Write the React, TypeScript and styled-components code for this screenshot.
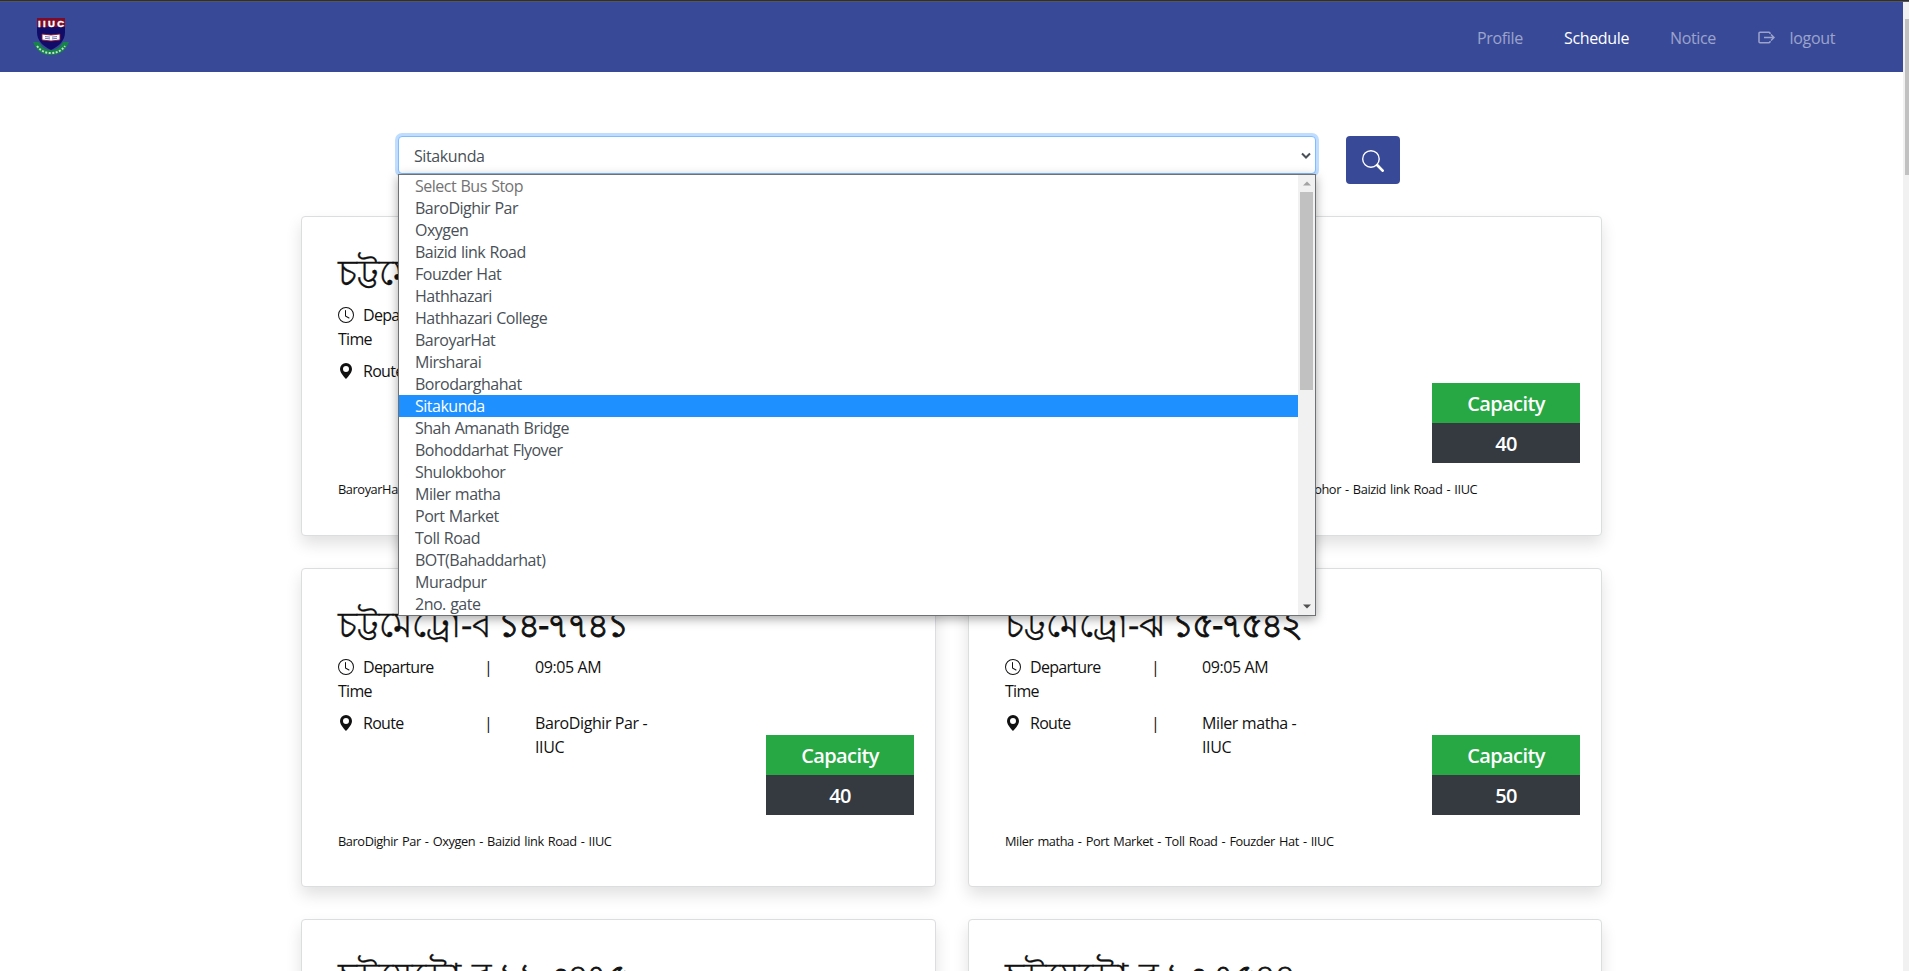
import React from 'react';
import styled, { createGlobalStyle, css } from 'styled-components';

const Global = createGlobalStyle`
  *, *::before, *::after { box-sizing: border-box; }
  html, body { margin: 0; height: 100%; overflow: hidden; background: #fff; }
  body { font: 400 16px/24px "Open Sans", "Noto Sans", sans-serif; color: #111; }
`;

const Screen = styled.div`
  display: flex;
  width: 1909px;
  height: 971px;
  overflow: hidden;
  border-top: 1px solid #2f2f33;
`;
const Page = styled.div`
  width: 1903px;
  height: 970px;
  overflow: hidden;
  border-top: 1px solid #55565a;
`;
const PageScroll = styled.div`
  width: 6px;
  padding: 17px 0 0 2px;
  background: #f1f1f1;
  border-top: 1px solid #55565a;
`;
const PageThumb = styled.div`
  height: 156px;
  background: #c1c1c1;
`;
const Nav = styled.nav`
  display: flex;
  align-items: center;
  justify-content: space-between;
  height: 70px;
  padding: 0 68px 0 33px;
  background: #384998;
`;
const Links = styled.div`
  display: flex;
  align-items: center;
  gap: 41px;
`;
const NavLink = styled.a<{ $active?: boolean; $w: number }>`
  display: flex;
  align-items: center;
  justify-content: space-between;
  width: ${p => p.$w}px;
  padding-top: 1px;
  white-space: nowrap;
  letter-spacing: -0.35px;
  color: ${p => (p.$active ? '#fff' : 'rgba(255,255,255,.5)')};
`;
const Main = styled.main`
  width: 1301px;
  margin: 0 auto;
  padding-top: 64px;
`;
const Search = styled.form`
  display: flex;
  align-items: flex-start;
  gap: 30px;
  height: 80px;
  padding-left: 97px;
`;
const Field = styled.div`
  position: relative;
  width: 918px;
`;
const Select = styled.div`
  display: flex;
  align-items: center;
  justify-content: space-between;
  height: 38px;
  padding: 1px 4px 0 15px;
  border: 1px solid #80bdff;
  border-radius: 4px;
  box-shadow: 0 0 0 3px #bfdeff;
  color: #495057;
  letter-spacing: -0.4px;
  background: #fff;
`;
const Menu = styled.div`
  position: absolute;
  z-index: 5;
  top: 38px;
  left: 0;
  display: flex;
  width: 918px;
  height: 442px;
  background: #fff;
  border: 1px solid #6f7275;
  box-shadow: 0 3px 10px rgba(0,0,0,.35);
`;
const Options = styled.div`
  flex: 1;
`;
const Option = styled.div<{ $state?: 'muted' | 'selected' }>`
  height: 22px;
  padding-left: 16px;
  line-height: 22px;
  color: #495057;
  letter-spacing: -0.5px;
  word-spacing: 0.7px;
  ${p => p.$state === 'muted' && css`color: #737373;`}
  ${p => p.$state === 'selected' && css`color: #fff; background: #1e90ff;`}
`;
const MenuScroll = styled.div`
  display: flex;
  flex-direction: column;
  justify-content: space-between;
  align-items: center;
  width: 17px;
  padding: 6px 0;
  background: #f1f1f1;
`;
const MenuThumb = styled.div`
  width: 13px;
  height: 198px;
  margin: 6px 0 auto;
  background: #c1c1c1;
`;
const SearchButton = styled.button`
  display: flex;
  align-items: center;
  justify-content: center;
  width: 54px;
  height: 48px;
  padding: 2px 0 0;
  border: 0;
  border-radius: 4px;
  background: #384998;
`;
const Grid = styled.div`
  display: grid;
  grid-template-columns: 635px 634px;
  grid-auto-rows: 319.600px;
  gap: 32px;
`;
const Card = styled.article`
  padding: 35px 21px 0 36px;
  background: #fff;
  border: 1px solid #dcdddf;
  border-radius: 4px;
  box-shadow: 0 8px 16px rgba(0,0,0,.12);
`;
const Plate = styled.h2`
  height: 40px;
  margin: 0 0 8px;
  font-weight: 400;
  font-size: 35px;
  line-height: 40px;
  white-space: nowrap;
  -webkit-text-stroke: 0.3px currentColor;
`;
const PlateNumber = styled.span`
  margin-left: -2px;
  font-size: 34px;
  letter-spacing: -2px;
  -webkit-text-stroke: 0.8px currentColor;
`;
const Body = styled.div`
  display: flex;
  justify-content: space-between;
  height: 166px;
`;
const Facts = styled.div`
  width: 340px;
  padding-top: 3px;
`;
const Fact = styled.div`
  display: grid;
  grid-template-columns: 146px 51px 122px;
  margin-bottom: 8px;
  letter-spacing: -0.4px;
`;
const Label = styled.div`
  width: 110px;
  letter-spacing: -0.7px;
  svg { margin-right: 9px; vertical-align: -2px; }
`;
const Capacity = styled.div`
  width: 148px;
  margin-top: 83px;
  color: #fff;
  font-weight: 600;
  font-size: 20px;
  line-height: 41px;
  text-align: center;
  letter-spacing: -0.6px;
`;
const CapacityRow = styled.div<{ $tone: string }>`
  height: 40px;
  background: ${p => p.$tone};
`;
const Stops = styled.p`
  margin: 13px 0 0;
  font-size: 12.800px;
  line-height: 20px;
  letter-spacing: -0.42px;
  word-spacing: 1.200px;
  white-space: nowrap;
`;

const Logo = () => (
  <svg width="36" height="38" viewBox="0 0 36 38">
    <path d="M4 0h28v14c0 9-6 14-14 18C10 28 4 23 4 14z" fill="#100c68" />
    <path d="M4 0h28v9H4z" fill="#7d0c2b" />
    <text x="18" y="8.500" fill="#fff" fontFamily="Liberation Sans" fontWeight="700" fontSize="9.500" textAnchor="middle" textLength="26" stroke="#fff" strokeWidth=".4">IIUC</text>
    <path d="M9 16l9 1 9-1v6l-9 1-9-1z" fill="#fff" stroke="#8a1636" strokeWidth=".9" />
    <path d="M12 18.500l5 .6M12 20.300l5 .6M24 18.500l-5 .6M24 20.300l-5 .6" stroke="#5a58a0" strokeWidth=".8" />
    <path d="M0 24l6 0c3 6 7 8 12 8s9-2 12-8h6l-2 4c-3 6-9 9-16 9S5 34 2 28z" fill="#168348" />
    <path d="M4 28c4 5 8 7 14 7s10-2 14-7" fill="none" stroke="#bfe2cb" strokeWidth="2" strokeDasharray="2 1.500" />
  </svg>
);
const Clock = () => (
  <svg width="16" height="16" viewBox="0 0 16 16" fill="currentColor">
    <path d="M8 15A7 7 0 1 0 8 1a7 7 0 0 0 0 14zm8-7A8 8 0 1 1 0 8a8 8 0 0 1 16 0z" />
    <path d="M7.500 3a.5.5 0 0 1 .5.5v5.210l3.248 1.856a.5.5 0 0 1-.496.868l-3.500-2A.5.5 0 0 1 7 9V3.500a.5.5 0 0 1 .5-.5z" />
  </svg>
);
const Pin = () => (
  <svg width="16" height="16" viewBox="0 0 16 16" fill="currentColor">
    <path fillRule="evenodd" d="M8 16s6-5.686 6-10A6 6 0 0 0 2 6c0 4.314 6 10 6 10zm0-7a3 3 0 1 0 0-6 3 3 0 0 0 0 6z" />
  </svg>
);
const Exit = () => (
  <svg width="17" height="16" viewBox="0 0 17 16" fill="none" stroke="currentColor" strokeWidth="1.500">
    <path d="M12 4V3.200a1 1 0 0 0-1-1H2a1 1 0 0 0-1 1v8.600a1 1 0 0 0 1 1h9a1 1 0 0 0 1-1V11M6 7.500h10M13 4.500l3 3-3 3" />
  </svg>
);
const Magnifier = () => (
  <svg width="22" height="22" viewBox="0 0 16 16" fill="#fff">
    <path fillRule="evenodd" d="M10.442 10.442a1 1 0 0 1 1.415 0l3.850 3.850a1 1 0 0 1-1.414 1.415l-3.850-3.850a1 1 0 0 1 0-1.415z" />
    <path fillRule="evenodd" d="M6.500 12a5.500 5.500 0 1 0 0-11 5.500 5.500 0 0 0 0 11zM13 6.500a6.500 6.500 0 1 1-13 0 6.500 6.500 0 0 1 13 0z" />
  </svg>
);
const Chevron = () => (
  <svg width="10" height="8" viewBox="0 0 10 8" fill="none" stroke="#495057" strokeWidth="2">
    <path d="M1 1.500l4 4 4-4" />
  </svg>
);
const Arrow = ({ down = false }: { down?: boolean }) => (
  <svg width="8" height="5" viewBox="0 0 8 5" fill={down ? '#505050' : '#a3a3a3'}>
    <path d={down ? 'M0 .5h8l-4 4z' : 'M0 4.500h8l-4-4z'} />
  </svg>
);

const stops = [
  'Select Bus Stop', 'BaroDighir Par', 'Oxygen', 'Baizid link Road', 'Fouzder Hat', 'Hathhazari',
  'Hathhazari College', 'BaroyarHat', 'Mirsharai', 'Borodarghahat', 'Sitakunda', 'Shah Amanath Bridge',
  'Bohoddarhat Flyover', 'Shulokbohor', 'Miler matha', 'Port Market', 'Toll Road', 'BOT(Bahaddarhat)',
  'Muradpur', '2no. gate',
];
const buses = [
  { plate: 'চট্টমেট্রো-ব', number: '১১-৩৪৭১', route: 'BaroyarHat - IIUC', seats: 40, via: 'BaroyarHat - Mirsharai - Sitakunda - IIUC' },
  { plate: 'চট্টমেট্রো-ব', number: '১১-৩৪৭২', route: 'Bohoddarhat Flyover - IIUC', seats: 40, via: 'Bohoddarhat Flyover - Muradpur - 2no. gate - Shulokbohor - Baizid link Road - IIUC' },
  { plate: 'চট্টমেট্রো-ব', number: '১৪-৭৭৪১', route: 'BaroDighir Par - IIUC', seats: 40, via: 'BaroDighir Par - Oxygen - Baizid link Road - IIUC' },
  { plate: 'চট্টমেট্রো-ঝ', number: '১৫-৭৫৪২', route: 'Miler matha - IIUC', seats: 50, via: 'Miler matha - Port Market - Toll Road - Fouzder Hat - IIUC' },
  { plate: 'চট্টমেট্রো-ব', number: '১১-৩৪৭৫', route: 'Oxygen - IIUC', seats: 40, via: 'Oxygen - Baizid link Road - IIUC' },
  { plate: 'চট্টমেট্রো-ব', number: '১৩-৭৫৪৪', route: 'Muradpur - IIUC', seats: 40, via: 'Muradpur - 2no. gate - IIUC' },
];

export default function App() {
  return (
    <Screen>
      <Global />
      <Page>
        <Nav>
          <Logo />
          <Links>
            <NavLink $w={46}>Profile</NavLink>
            <NavLink $w={65} $active>Schedule</NavLink>
            <NavLink $w={47}>Notice</NavLink>
            <NavLink $w={77}><Exit />logout</NavLink>
          </Links>
        </Nav>
        <Main>
          <Search>
            <Field>
              <Select>Sitakunda<Chevron /></Select>
              <Menu>
                <Options>
                  {stops.map((s, i) => (
                    <Option key={s} $state={i === 0 ? 'muted' : s === 'Sitakunda' ? 'selected' : undefined}>{s}</Option>
                  ))}
                </Options>
                <MenuScroll><Arrow /><MenuThumb /><Arrow down /></MenuScroll>
              </Menu>
            </Field>
            <SearchButton type="button"><Magnifier /></SearchButton>
          </Search>
          <Grid>
            {buses.map((b, i) => (
              <Card key={i}>
                <Plate>{b.plate} <PlateNumber>{b.number}</PlateNumber></Plate>
                <Body>
                  <Facts>
                    <Fact><Label><Clock />Departure Time</Label><span>|</span><span>09:05 AM</span></Fact>
                    <Fact><Label><Pin />Route</Label><span>|</span><span>{b.route}</span></Fact>
                  </Facts>
                  <Capacity>
                    <CapacityRow $tone="#28a745">Capacity</CapacityRow>
                    <CapacityRow $tone="#343a40">{b.seats}</CapacityRow>
                  </Capacity>
                </Body>
                <Stops>{b.via}</Stops>
              </Card>
            ))}
          </Grid>
        </Main>
      </Page>
      <PageScroll><PageThumb /></PageScroll>
    </Screen>
  );
}
